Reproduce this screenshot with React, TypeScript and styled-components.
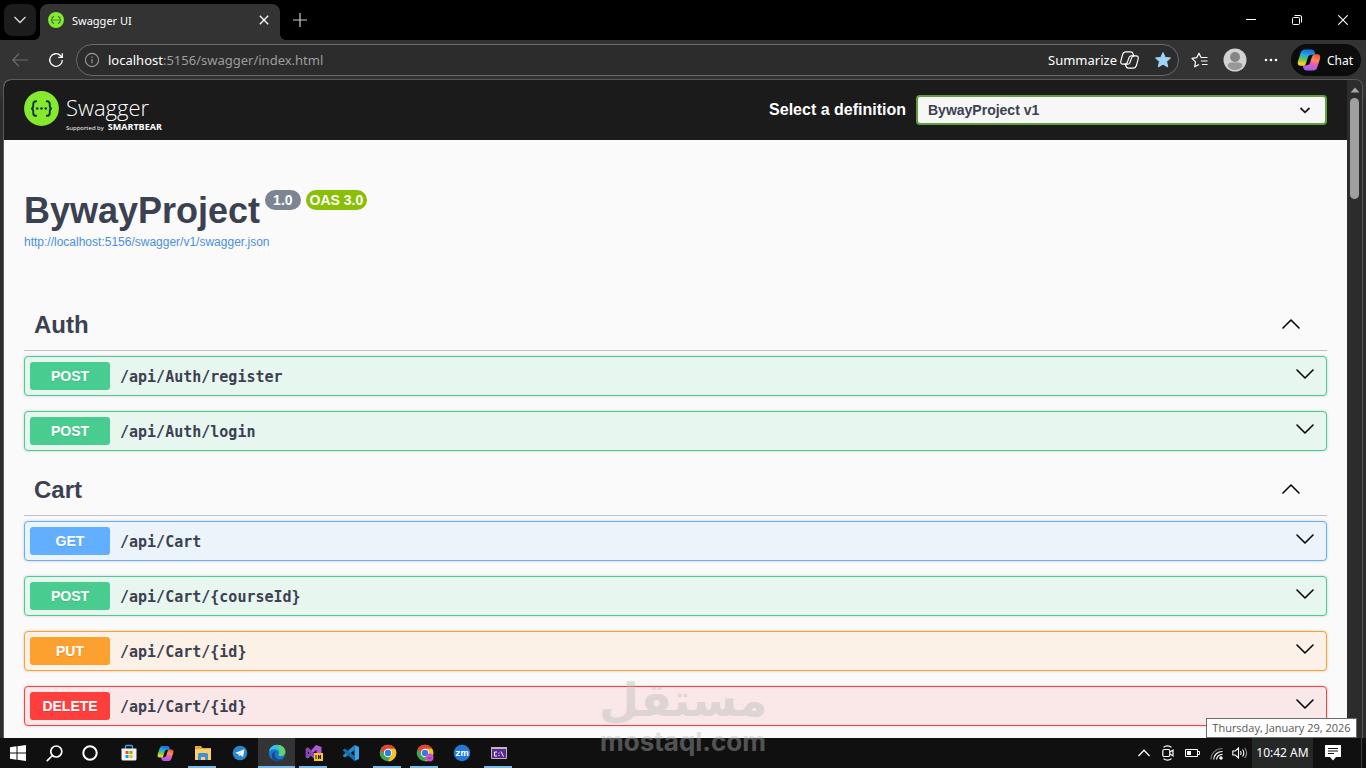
import React, { useId } from "react";
import styled, { createGlobalStyle } from "styled-components";

const GlobalStyle = createGlobalStyle`
  *, *::before, *::after { box-sizing: border-box; }
  body { margin: 0; background: #000; }
  button, input, select { font: inherit; color: inherit; }
  button { border: 0; padding: 0; background: none; cursor: pointer; }
  svg { display: block; flex: none; }
  h1, h2 { margin: 0; }
`;

const chromeFont = `"Noto Sans", "Open Sans", sans-serif`;
const pageFont = `"Liberation Sans", Arial, sans-serif`;

const Desktop = styled.div`
  position: relative;
  display: flex;
  flex-direction: column;
  height: 100vh;
  overflow: hidden;
  background: #2d2d2d;
  font-family: ${chromeFont};
`;

/* ---------- browser frame ---------- */

const TabStrip = styled.header`
  display: flex;
  flex: none;
  height: 40px;
  padding-left: 4px;
  background: #000;
  color: #fff;
`;

const TabMenuButton = styled.button`
  display: grid;
  place-items: center;
  width: 32px;
  height: 32px;
  margin: 4px 4px 0 0;
  border-radius: 8px;
  background: #1c1c1c;
`;

const Tab = styled.div`
  position: relative;
  display: flex;
  align-items: center;
  width: 240px;
  height: 36px;
  margin-top: 4px;
  padding: 0 8px 4px;
  border-radius: 8px 8px 0 0;
  background: #333;
  font-size: 11px;

  &::before,
  &::after {
    content: "";
    position: absolute;
    bottom: 0;
    width: 6px;
    height: 6px;
  }
  &::before { right: 100%; background: radial-gradient(circle at 0 0, #000 6px, #333 6px); }
  &::after { left: 100%; background: radial-gradient(circle at 100% 0, #000 6px, #333 6px); }
`;

const TabTitle = styled.span`
  flex: 1;
  margin-left: 8px;
`;

const IconButton = styled.button<{ $w?: number; $h?: number }>`
  display: grid;
  place-items: center;
  flex: none;
  width: ${(p) => p.$w ?? 36}px;
  height: ${(p) => p.$h ?? 32}px;
  color: #fff;
`;

const WindowControls = styled.div`
  display: flex;
  margin-left: auto;
`;

const Toolbar = styled.div`
  display: flex;
  flex: none;
  align-items: center;
  height: 39px;
  padding: 1px 5px 0 2px;
  background: #333;
  color: #fff;
`;

const AddressBar = styled.div`
  display: flex;
  flex: 1;
  align-items: center;
  height: 32px;
  margin-left: 2px;
  margin-right: 2px;
  padding-left: 7px;
  border: 1px solid #6a6a6a;
  border-radius: 16px;
  background: #2c2c2c;
`;

const Url = styled.div`
  flex: 1;
  margin-left: 8px;
  color: #9d9d9d;
  font-size: 13px;

  b { color: #fff; font-weight: 400; }
`;

const SummarizeButton = styled.button`
  display: flex;
  align-items: center;
  gap: 3px;
  margin-right: 8px;
  font-size: 13px;
`;

const ChatButton = styled.button`
  display: flex;
  align-items: center;
  gap: 6px;
  width: 70px;
  height: 32px;
  margin-left: 2px;
  padding-left: 6px;
  border-radius: 16px;
  background: #0c0c0c;
  font-size: 12px;
`;

const Viewport = styled.div`
  display: flex;
  flex: 1;
  min-height: 0;
  margin: 0 3px;
  border: solid #5a5a5a;
  border-width: 1px 1px 0 1px;
  border-radius: 8px 8px 0 0;
  overflow: hidden;
`;

const Backdrop = styled.div`
  display: flex;
  flex: 1;
  min-height: 0;
  background: linear-gradient(#333 20px, #2d2d2d 20px);
`;

const Scrollbar = styled.div`
  display: flex;
  flex-direction: column;
  align-items: center;
  gap: 5px;
  width: 15px;
  padding-top: 7px;
  background: #2c2c2c;
`;

const ScrollThumb = styled.div`
  width: 9px;
  height: 101px;
  border-radius: 5px;
  background: #9f9f9f;
`;

/* ---------- Swagger page ---------- */

const Page = styled.div`
  flex: 1;
  min-width: 0;
  overflow: hidden;
  background: #fafafa;
  color: #3b4151;
  font-family: ${pageFont};
`;

const Topbar = styled.div`
  display: flex;
  align-items: center;
  justify-content: space-between;
  height: 60px;
  padding: 0 20px;
  background: #1b1b1b;
  color: #fff;
`;

const Brand = styled.a`
  display: flex;
  align-items: flex-start;
  gap: 7px;
  padding-top: 2px;
  color: #fff;
  text-decoration: none;
  font-family: "Open Sans", sans-serif;
`;

const BrandText = styled.div`
  display: flex;
  flex-direction: column;
`;

const BrandName = styled.span`
  font-size: 22px;
  font-weight: 300;
  line-height: 32px;
`;

const BrandNote = styled.span`
  display: flex;
  align-items: baseline;
  gap: 4px;
  font-size: 6px;
  line-height: 8px;

  b { font-size: 9px; font-weight: 700; }
`;

const DefinitionPicker = styled.div`
  display: flex;
  align-items: center;
  gap: 10px;
  font-size: 16px;
  font-weight: 700;
`;

const SelectWrap = styled.div`
  position: relative;
  width: 411px;

  svg {
    position: absolute;
    right: 16px;
    top: 9px;
    pointer-events: none;
  }
`;

const Select = styled.select`
  width: 100%;
  height: 30px;
  padding: 0 40px 0 10px;
  border: 2px solid #62a03f;
  border-radius: 4px;
  appearance: none;
  background: #f7f7f7;
  color: #3b4151;
  font-size: 14px;
  font-weight: 700;
`;

const Info = styled.section`
  padding: 50px 20px 51px;
`;

const TitleRow = styled.div`
  display: flex;
  align-items: flex-start;
  gap: 5px;
  height: 44px;
`;

const Title = styled.h1`
  font-size: 36px;
  line-height: 41px;
`;

const VersionTag = styled.span<{ $bg: string; $pad: number }>`
  height: 20px;
  padding: 0 ${(p) => p.$pad}px;
  border-radius: 10px;
  background: ${(p) => p.$bg};
  color: #fff;
  font-size: 14px;
  font-weight: 700;
  line-height: 21px;
`;

const SpecLink = styled.a`
  display: block;
  color: #4990e2;
  font-size: 12px;
  line-height: 16px;
  text-decoration: none;
`;

const Section = styled.section`
  padding: 0 20px;
`;

const SectionHead = styled.div`
  display: flex;
  align-items: center;
  justify-content: space-between;
  height: 50px;
  margin-bottom: 5px;
  padding: 0 26px 2px 10px;
  border-bottom: 1px solid #c0c1c6;
`;

const SectionTitle = styled.h2`
  font-size: 24px;
  line-height: 28px;
`;

const tones = {
  POST: { main: "#49cc90", soft: "#e8f6f0" },
  GET: { main: "#61affe", soft: "#ebf3fb" },
  PUT: { main: "#fca130", soft: "#fbf1e6" },
  DELETE: { main: "#ff3e3e", soft: "#fae7e7" },
};
type Method = keyof typeof tones;

const Operation = styled.button<{ $method: Method }>`
  display: flex;
  align-items: center;
  width: 100%;
  height: 40px;
  margin-bottom: 15px;
  padding: 0 11px 0 5px;
  border: 1px solid ${(p) => tones[p.$method].main};
  border-radius: 4px;
  background: ${(p) => tones[p.$method].soft};
  box-shadow: 0 0 3px rgba(0, 0, 0, 0.19);
  text-align: left;
`;

const MethodBadge = styled.span<{ $method: Method }>`
  width: 80px;
  border-radius: 3px;
  background: ${(p) => tones[p.$method].main};
  color: #fff;
  font-size: 14px;
  font-weight: 700;
  line-height: 28px;
  text-align: center;
  text-shadow: 0 1px 0 rgba(0, 0, 0, 0.1);
`;

const PathText = styled.span`
  flex: 1;
  padding: 2px 0 0 10px;
  color: #3b4151;
  font-family: "DejaVu Sans Mono", monospace;
  font-size: 15px;
  font-weight: 700;
`;

/* ---------- taskbar ---------- */

const Taskbar = styled.footer`
  display: flex;
  flex: none;
  height: 30px;
  background: #101010;
  color: #fff;
`;

const TaskGroup = styled.div<{ $gap?: number }>`
  display: flex;
  margin-right: ${(p) => p.$gap ?? 0}px;
`;

const TaskButton = styled.button<{ $w: number; $running?: boolean; $active?: boolean }>`
  display: grid;
  place-items: center;
  position: relative;
  width: ${(p) => p.$w}px;
  height: 30px;
  background: ${(p) => (p.$active ? "#343434" : "transparent")};
  color: #fff;

  &::after {
    content: "";
    position: absolute;
    bottom: 0;
    left: ${(p) => (p.$active ? 0 : 4)}px;
    right: ${(p) => (p.$active ? 0 : 5)}px;
    height: 2px;
    background: ${(p) => (p.$running ? "#76b9ed" : "transparent")};
  }
`;

const Tray = styled.div`
  display: flex;
  margin-left: auto;
  margin-right: 4px;
  padding-right: 9px;
  border-right: 1px solid #3c3c3c;
`;

const Clock = styled.button`
  width: 61px;
  background: #262828;
  color: #fff;
  font-size: 12px;
  line-height: 28px;
  white-space: nowrap;
`;

const DateTooltip = styled.div`
  position: absolute;
  right: 9px;
  bottom: 30px;
  width: 151px;
  height: 20px;
  border: 1px solid #6b6b6b;
  background: #fff;
  color: #575757;
  font-family: "Open Sans", sans-serif;
  font-size: 11px;
  line-height: 18px;
  text-align: center;
  white-space: nowrap;
`;

const Watermark = styled.div`
  position: absolute;
  left: 50%;
  bottom: 12px;
  display: flex;
  flex-direction: column;
  align-items: center;
  width: 170px;
  margin-left: -85px;
  color: #b6b8b8;
  opacity: 0.4;
  font-weight: 700;
  pointer-events: none;
`;

const WatermarkArabic = styled.span`
  font-family: "DejaVu Sans", sans-serif;
  font-size: 46px;
  line-height: 56px;
`;

const WatermarkLatin = styled.span`
  font-family: Inter, sans-serif;
  font-size: 26px;
  line-height: 28px;
`;

/* ---------- drawings ---------- */

const SwaggerMark = ({ size }: { size: number }) => (
  <svg width={size} height={size} viewBox="0 0 36 36" fill="none">
    <circle cx="18" cy="18" r="17.9" fill="#85ea2d" />
    <g stroke="#173647" strokeWidth="2" strokeLinecap="round">
      <path d="M12.5 10.5c-2.6 0-3 1-3 3v1.8c0 1.7-.6 2.7-2.2 2.7 1.6 0 2.2 1 2.2 2.7v1.8c0 2 .4 3 3 3" />
      <path d="M23.5 10.5c2.6 0 3 1 3 3v1.8c0 1.7.6 2.7 2.2 2.7-1.6 0-2.2 1-2.2 2.7v1.8c0 2-.4 3-3 3" />
    </g>
    <g fill="#173647">
      <circle cx="13.6" cy="18" r="1.3" /><circle cx="18" cy="18" r="1.3" /><circle cx="22.4" cy="18" r="1.3" />
    </g>
  </svg>
);

const Copilot = ({ size }: { size: number }) => {
  const id = useId();
  const piece = "M18.600 6.800 17.700 4.200C17.100 2.400 16.300 1.500 14.400 1.500H7.600C5.400 1.500 4.300 2.700 3.600 5L1.200 12.500C.1 16.300 1.100 17.800 4 17.800H5.800C7.600 17.800 8.500 16.900 9.100 15l1.800-5.600c.6-1.800 1.400-2.600 3.200-2.600z";
  return (
    <svg width={size} height={size} viewBox="0 0 24 24">
      <defs>
        <linearGradient id={id + "a"} x1="0.55" y1="0" x2="0.4" y2="1">
          <stop offset="0.1" stopColor="#1a78e0" /><stop offset="0.38" stopColor="#22b2dc" />
          <stop offset="0.6" stopColor="#5cc552" /><stop offset="0.9" stopColor="#fbd024" />
        </linearGradient>
        <linearGradient id={id + "b"} x1="0.7" y1="0" x2="0.4" y2="1">
          <stop offset="0.1" stopColor="#a95cf0" /><stop offset="0.45" stopColor="#ea5cb4" />
          <stop offset="0.7" stopColor="#ff8a5c" /><stop offset="1" stopColor="#f8552f" />
        </linearGradient>
      </defs>
      <path d={piece} fill={`url(#${id}b)`} transform="rotate(180 12 12)" />
      <path d={piece} fill={`url(#${id}a)`} />
    </svg>
  );
};

const CopilotOutline = () => (
  <svg width="19" height="18" viewBox="0 0 19 18" fill="none" stroke="#fff" strokeWidth="1.2" strokeLinejoin="round">
    <path d="M13.700 4.800 13 2.700C12.600 1.400 11.900 .8 10.600 .8H5.600C4 .8 3.200 1.600 2.700 3.200L1 9.300C.3 12 1 13.200 3 13.200H4.900C6.300 13.200 7 12.500 7.400 11.100L9.100 6.400C9.500 5.300 10.200 4.800 11.300 4.800H14.500" />
    <path d="M5.300 13.200 6 15.300C6.400 16.600 7.100 17.200 8.400 17.200h5c1.600 0 2.400-.8 2.900-2.400L18 8.700C18.700 6 18 4.800 16 4.800H14.100C12.700 4.800 12 5.500 11.600 6.900L9.900 11.600C9.500 12.700 8.800 13.200 7.700 13.200H4.500" />
    <path d="M6.300 1 4.800 6.500M12.700 17l1.500-5.500" strokeWidth="0" />
  </svg>
);

const Chevron = ({ up }: { up?: boolean }) => (
  <svg width="20" height="20" viewBox="0 0 20 20" fill="none" stroke="#000" strokeWidth="1.6" strokeLinecap="round" strokeLinejoin="round">
    <path d={up ? "M2 13 10 5l8 8" : "M2 4l8 8 8-8"} />
  </svg>
);

const Edge = () => (
  <svg width="18" height="18" viewBox="0 0 18 18">
    <circle cx="9" cy="9" r="8.300" fill="#1b75c9" />
    <path d="M1 8C1.500 3.500 5 .7 9.200.7c4.800 0 8.200 3.500 8.200 7.100 0 2.700-2 4.200-4.300 4.200-2 0-2.800-.8-2.400-1.600.6-.8.700-1.400.4-2.300C10.300 5.900 8 5 5.800 5.200 3.600 5.400 1.700 6.500 1 8z" fill="#36c0dc" />
    <path d="M11 1c3.800.8 6.400 3.700 6.400 6.800 0 2.700-2 4.200-4.300 4.200-2 0-2.800-.8-2.400-1.600 1.500-2 1.300-5.400-1-7.400z" fill="#5fd26a" />
    <path d="M6.700 9.500c-.4 3 2 5.900 5.300 5.900 1.500 0 2.900-.5 4-1.300-1.500 2.200-4 3.400-7 3.300-3.600-.3-5.800-3.400-5.100-6.400C4.300 9 5.800 7.500 8 7.600 7.200 8 6.800 8.700 6.700 9.500z" fill="#124a8c" />
  </svg>
);

const VisualStudio = () => (
  <svg width="18" height="18" viewBox="0 0 18 18">
    <path d="M.8 4.800 2.800 3.600 6 6.500 11 .9 16.500 3v12L11 17.100 6 11.500 2.800 14.400.8 13.200zM2.800 7v4L4.700 9zM11.500 5.800 7.800 9l3.700 3.200z" fill="#b05ad6" fillRule="evenodd" />
    <path d="M.8 4.800 2.800 3.600 12 12v5L2.800 7v4L4.700 9 6 11.500 2.800 14.400.8 13.200z" fill="#8a44b8" />
    <rect x="9" y="9" width="9" height="8" fill="#f8c62b" />
    <path d="M11 11v4M13.500 15v-4l2 4v-4" stroke="#1b1b1b" fill="none" />
  </svg>
);

const Chrome = ({ badge }: { badge?: boolean }) => (
  <svg width="18" height="18" viewBox="0 0 18 18">
    <circle cx="9" cy="9" r="8.300" fill="#3aa757" />
    <path d="M1.800 4.850A8.300 8.300 0 0 1 16.200 4.850H9L5.400 11.100z" fill="#ea4335" />
    <path d="M16.200 4.850A8.300 8.300 0 0 1 9 17.300L12.600 11.100 9 4.850z" fill="#fbc116" />
    <circle cx="9" cy="9" r="4.200" fill="#fff" />
    <circle cx="9" cy="9" r="3.200" fill="#2f7de1" />
    {badge && <><circle cx="13.500" cy="13.500" r="4" fill="#c355c9" /><path d="M12 13.500c.4 1.200 2.500 1.200 3 0" stroke="#7a2a86" fill="none" /></>}
  </svg>
);

const pinned: { name: string; running?: boolean; active?: boolean; icon: React.ReactNode }[] = [
  { name: "Microsoft Store", icon: (
    <svg width="16" height="18" viewBox="0 0 16 18">
      <path d="M4.500 5V2.500a1 1 0 0 1 1-1h5a1 1 0 0 1 1 1V5" fill="none" stroke="#35a8e0" strokeWidth="1.300" />
      <path d="M.5 4.500h15V15a1.500 1.500 0 0 1-1.500 1.500H2A1.500 1.500 0 0 1 .5 15z" fill="#f2f2f2" />
      <path d="M4.500 7h3v3h-3z" fill="#f25022" /><path d="M8.500 7h3v3h-3z" fill="#7fba00" />
      <path d="M4.500 11h3v3h-3z" fill="#00a4ef" /><path d="M8.500 11h3v3h-3z" fill="#ffb900" />
    </svg>) },
  { name: "Copilot", icon: <Copilot size={17} /> },
  { name: "File Explorer", running: true, icon: (
    <svg width="18" height="16" viewBox="0 0 18 16">
      <path d="M1 1h6l1.500 2H17v3H1z" fill="#e8a33d" /><path d="M1 4h16v11H1z" fill="#fbd06a" />
      <path d="M4 15V9.500A1.500 1.500 0 0 1 5.500 8h7A1.500 1.500 0 0 1 14 9.500V15h-3v-3H7v3z" fill="#3f8fdc" />
    </svg>) },
  { name: "Telegram", icon: (
    <svg width="16" height="16" viewBox="0 0 16 16">
      <circle cx="8" cy="8" r="7.300" fill="#2488d0" />
      <path d="M3 8l9.500-3.800L11 12 8.300 10 7 11.300 6.500 9 3 8z" fill="#fff" /><path d="M6.500 9l4-3-2.800 3.600L7 11.300z" fill="#a9cfe8" />
    </svg>) },
  { name: "Microsoft Edge", running: true, active: true, icon: <Edge /> },
  { name: "Visual Studio", running: true, icon: <VisualStudio /> },
  { name: "Visual Studio Code", icon: (
    <svg width="18" height="18" viewBox="0 0 18 18">
      <path d="M12.500 1 17 3v12l-4.500 2z" fill="#38a3e8" />
      <path d="M12.500 1v5L3 13.600 1 12.200v-.9z" fill="#2489ca" />
      <path d="M12.500 17v-5L3 4.400 1 5.800v.9z" fill="#1070b3" />
    </svg>) },
  { name: "Google Chrome", running: true, icon: <Chrome /> },
  { name: "Google Chrome profile", running: true, icon: <Chrome badge /> },
  { name: "Zoom", icon: (
    <svg width="18" height="18" viewBox="0 0 18 18">
      <circle cx="9" cy="9" r="8.300" fill="#1f7ae0" />
      <text x="9" y="12" textAnchor="middle" fill="#fff" fontSize="9" fontWeight="700" fontFamily="Inter, sans-serif">zm</text>
    </svg>) },
  { name: "Command window", running: true, icon: (
    <svg width="16" height="14" viewBox="0 0 16 14">
      <path d="M.5 1.500h15v11H.5z" fill="#5b2a91" stroke="#b9b9b9" /><path d="M0 1h16v2H0z" fill="#b9b9b9" />
      <path d="M6 6H3.500v4H6M8 6.500v1M8 9v1M10 5.500l2.500 5" fill="none" stroke="#fff" />
    </svg>) },
];

const sections: { name: string; operations: [Method, string][] }[] = [
  { name: "Auth", operations: [["POST", "/api/Auth/register"], ["POST", "/api/Auth/login"]] },
  { name: "Cart", operations: [
    ["GET", "/api/Cart"], ["POST", "/api/Cart/{courseId}"], ["PUT", "/api/Cart/{id}"], ["DELETE", "/api/Cart/{id}"],
  ] },
];

const BrowserFrame = () => (
  <>
    <TabStrip>
      <TabMenuButton aria-label="Tab actions">
        <svg width="12" height="8" viewBox="0 0 12 8" fill="none" stroke="#ddd" strokeWidth="1.300"><path d="M.5 1 6 6.500 11.500 1" /></svg>
      </TabMenuButton>
      <Tab>
        <SwaggerMark size={16} />
        <TabTitle>Swagger UI</TabTitle>
        <IconButton $w={16} $h={16} aria-label="Close tab">
          <svg width="10" height="10" viewBox="0 0 10 10" stroke="#fff" strokeWidth="1.300"><path d="M.8.8l8.400 8.400M9.200.8.8 9.200" /></svg>
        </IconButton>
      </Tab>
      <IconButton $w={40} $h={40} aria-label="New tab">
        <svg width="14" height="14" viewBox="0 0 14 14" stroke="#ccc" strokeWidth="1.200"><path d="M7 0v14M0 7h14" /></svg>
      </IconButton>
      <WindowControls>
        <IconButton $w={46} $h={40} aria-label="Minimize">
          <svg width="10" height="10" viewBox="0 0 10 10" stroke="#fff"><path d="M0 4.500h10" /></svg>
        </IconButton>
        <IconButton $w={46} $h={40} aria-label="Restore">
          <svg width="10" height="10" viewBox="0 0 10 10" fill="none" stroke="#fff">
            <rect x=".5" y="2.500" width="7" height="7" rx="1" /><path d="M2.500.5H8A1.500 1.500 0 0 1 9.500 2v5.500" />
          </svg>
        </IconButton>
        <IconButton $w={46} $h={40} aria-label="Close">
          <svg width="10" height="10" viewBox="0 0 10 10" stroke="#fff" strokeWidth="1.100"><path d="M.3.3l9.400 9.400M9.700.3.3 9.700" /></svg>
        </IconButton>
      </WindowControls>
    </TabStrip>
    <Toolbar>
      <IconButton aria-label="Back">
        <svg width="16" height="14" viewBox="0 0 16 14" fill="none" stroke="#6f6f6f" strokeWidth="1.200"><path d="M16 7H1M7 .7.8 7 7 13.300" /></svg>
      </IconButton>
      <IconButton aria-label="Reload">
        <svg width="16" height="16" viewBox="0 0 16 16" fill="none" stroke="#fff" strokeWidth="1.300">
          <path d="M14.300 8A6.300 6.300 0 1 1 12.600 3.700L14 5.200" /><path d="M14.300 1.200v4.100h-4.100" />
        </svg>
      </IconButton>
      <AddressBar>
        <svg width="16" height="16" viewBox="0 0 16 16" fill="none" stroke="#9a9a9a" strokeWidth="1.100">
          <circle cx="8" cy="8" r="6.600" /><path d="M8 7v4.200M8 4.600v1.300" />
        </svg>
        <Url><b>localhost</b>:5156/swagger/index.html</Url>
        <SummarizeButton>Summarize<CopilotOutline /></SummarizeButton>
        <IconButton $w={31} $h={30} aria-label="Edit favorite">
          <svg width="18" height="18" viewBox="0 0 18 18" fill="#9fd4f7" stroke="#9fd4f7" strokeLinejoin="round"><path d="M9 1.500l2.200 4.900 5.300.6-3.900 3.600 1.100 5.300L9 13.200l-4.700 2.700 1.100-5.300L1.500 7l5.300-.6z" /></svg>
        </IconButton>
      </AddressBar>
      <IconButton aria-label="Favorites">
        <svg width="17" height="17" viewBox="0 0 17 17" fill="none" stroke="#fff" strokeWidth="1.200" strokeLinejoin="round">
          <path d="M10 5.500 8 1.200 5.800 5.600 1 6.300l3.500 3.500-.8 5L8 12.500M10 5.500h6.500M10 9h6.500M11 12.500h5.500" />
        </svg>
      </IconButton>
      <IconButton aria-label="Profile">
        <svg width="24" height="24" viewBox="0 0 24 24">
          <circle cx="12" cy="12" r="11.500" fill="#d2d2d2" /><circle cx="12" cy="9" r="5" fill="#858585" />
          <path d="M4.500 18c0-2.500 2-3.500 4-3.500h7c2 0 4 1 4 3.500-1.500 2.500-4.500 4-7.500 4s-6-1.500-7.500-4z" fill="#979797" />
        </svg>
      </IconButton>
      <IconButton aria-label="Settings and more">
        <svg width="14" height="4" viewBox="0 0 14 4" fill="#fff"><circle cx="2" cy="2" r="1.300" /><circle cx="7" cy="2" r="1.300" /><circle cx="12" cy="2" r="1.300" /></svg>
      </IconButton>
      <ChatButton><Copilot size={24} />Chat</ChatButton>
    </Toolbar>
  </>
);

const SwaggerPage = () => (
  <Page>
    <Topbar>
      <Brand href="#" aria-label="Swagger">
        <SwaggerMark size={35} />
        <BrandText>
          <BrandName>Swagger</BrandName>
          <BrandNote>Supported by <b>SMARTBEAR</b></BrandNote>
        </BrandText>
      </Brand>
      <DefinitionPicker>
        <label htmlFor="definition">Select a definition</label>
        <SelectWrap>
          <Select id="definition"><option>BywayProject v1</option></Select>
          <svg width="12" height="12" viewBox="0 0 12 12" fill="none" stroke="#1b1b1b" strokeWidth="1.800"><path d="M1.500 4 6 8.300 10.500 4" /></svg>
        </SelectWrap>
      </DefinitionPicker>
    </Topbar>
    <Info>
      <TitleRow>
        <Title>BywayProject</Title>
        <VersionTag $bg="#7d8492" $pad={8}>1.0</VersionTag>
        <VersionTag $bg="#89bf04" $pad={4}>OAS 3.0</VersionTag>
      </TitleRow>
      <SpecLink href="#">http://localhost:5156/swagger/v1/swagger.json</SpecLink>
    </Info>
    {sections.map((section) => (
      <Section key={section.name}>
        <SectionHead>
          <SectionTitle>{section.name}</SectionTitle>
          <IconButton $w={20} $h={20} aria-label={`Collapse ${section.name}`}><Chevron up /></IconButton>
        </SectionHead>
        {section.operations.map(([method, path]) => (
          <Operation key={method + path} $method={method}>
            <MethodBadge $method={method}>{method}</MethodBadge>
            <PathText>{path}</PathText>
            <Chevron />
          </Operation>
        ))}
      </Section>
    ))}
  </Page>
);

const WindowsTaskbar = () => (
  <Taskbar>
    <TaskGroup $gap={2}>
      <TaskButton $w={36} aria-label="Start">
        <svg width="16" height="16" viewBox="0 0 16 16" fill="#fff"><path d="M0 2.200 6.500 1.300V7.500H0zM7.500 1.200 16 0v7.500H7.500zM0 8.500h6.500v6.200L0 13.800zM7.500 8.500H16V16l-8.500-1.200z" /></svg>
      </TaskButton>
      <TaskButton $w={36} aria-label="Search">
        <svg width="17" height="17" viewBox="0 0 17 17" fill="none" stroke="#fff" strokeWidth="1.700"><circle cx="10.300" cy="6.500" r="5.500" /><path d="M6.400 10.500.8 16.200" /></svg>
      </TaskButton>
      <TaskButton $w={36} aria-label="Cortana">
        <svg width="16" height="16" viewBox="0 0 16 16" fill="none" stroke="#fff" strokeWidth="2"><circle cx="8" cy="8" r="6.700" /></svg>
      </TaskButton>
    </TaskGroup>
    <TaskGroup>
      {pinned.map((app) => (
        <TaskButton key={app.name} $w={37} $running={app.running} $active={app.active} aria-label={app.name}>{app.icon}</TaskButton>
      ))}
    </TaskGroup>
    <Tray>
      <TaskButton $w={24} aria-label="Show hidden icons">
        <svg width="12" height="8" viewBox="0 0 12 8" fill="none" stroke="#fff" strokeWidth="1.300"><path d="M.5 7 6 1.300 11.500 7" /></svg>
      </TaskButton>
      <TaskButton $w={24} aria-label="Meet now">
        <svg width="12" height="16" viewBox="0 0 12 16" fill="none" stroke="#fff" strokeWidth="1.200">
          <rect x=".8" y="4.500" width="7" height="7" rx="1.500" /><path d="M8 7l3-2v6L8 9M1.500 2.300C3.500.3 7.500.3 9.500 2.300M1.500 13.700c2 2 6 2 8 0" />
        </svg>
      </TaskButton>
      <TaskButton $w={24} aria-label="Battery">
        <svg width="15" height="10" viewBox="0 0 15 10"><path d="M.5 1.500h12v7H.5zM13 3.500h1.500v3H13" fill="none" stroke="#fff" /><path d="M2 3h4v4H2z" fill="#fff" /></svg>
      </TaskButton>
      <TaskButton $w={24} aria-label="Network">
        <svg width="13" height="13" viewBox="0 0 13 13" fill="none" strokeWidth="1.200">
          <path d="M1 12.500C1 6 6 1.500 12.500 1.500" stroke="#777" />
          <path d="M3.800 12.500C3.800 7.800 7.500 4.500 12.500 4.500M6.600 12.500c0-3 2.600-5.200 5.900-5.200" stroke="#fff" />
          <circle cx="11" cy="11" r="1.700" fill="#fff" />
        </svg>
      </TaskButton>
      <TaskButton $w={24} aria-label="Volume">
        <svg width="16" height="14" viewBox="0 0 16 14" fill="none" stroke="#fff" strokeWidth="1.100">
          <path d="M.8 5h2.400L6.500 2v10L3.200 9H.8zM8.500 5c.8 1.200.8 2.800 0 4M10.500 3.500c1.500 2 1.500 5 0 7" /><path d="M12.700 2c2.300 3 2.300 7 0 10" stroke="#999" />
        </svg>
      </TaskButton>
      <Clock>10:42 AM</Clock>
      <TaskButton $w={39} aria-label="Notifications">
        <svg width="16" height="16" viewBox="0 0 16 16"><path d="M0 0h16v12h-5l-3 3.500L5 12H0z" fill="#fff" /><path d="M3 3.500h10M3 6h10M3 8.500h6" stroke="#101010" /></svg>
      </TaskButton>
    </Tray>
  </Taskbar>
);

export default function App() {
  return (
    <>
      <GlobalStyle />
      <Desktop>
        <BrowserFrame />
        <Backdrop>
          <Viewport>
            <SwaggerPage />
            <Scrollbar aria-hidden="true">
              <svg width="10" height="6" viewBox="0 0 10 6"><path d="M5 .5 9.500 5.500h-9z" fill="#a6a6a6" /></svg>
              <ScrollThumb />
            </Scrollbar>
          </Viewport>
        </Backdrop>
        <WindowsTaskbar />
        <Watermark aria-hidden="true">
          <WatermarkArabic lang="ar" dir="rtl">مستقل</WatermarkArabic>
          <WatermarkLatin>mostaql.com</WatermarkLatin>
        </Watermark>
        <DateTooltip role="tooltip">Thursday, January 29, 2026</DateTooltip>
      </Desktop>
    </>
  );
}
